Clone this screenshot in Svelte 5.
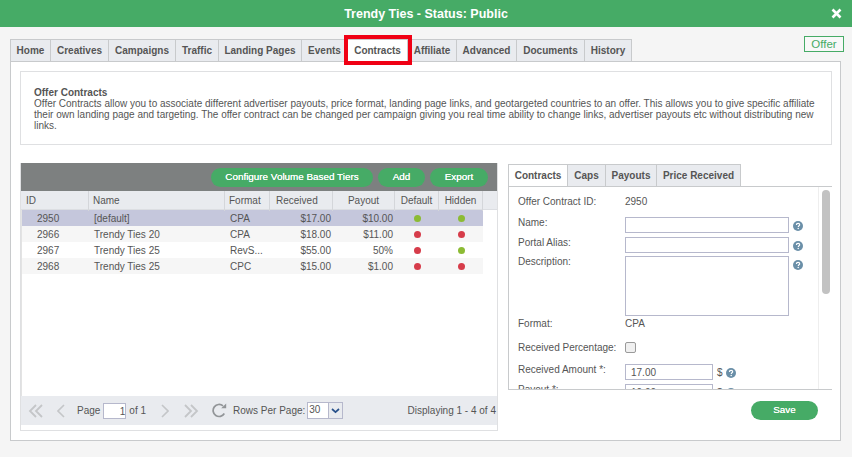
<script>
  const tabs = ['Home','Creatives','Campaigns','Traffic','Landing Pages','Events','Contracts','Affiliate','Advanced','Documents','History'];
  const subTabs = ['Contracts','Caps','Payouts','Price Received'];
  const cols = [['ID','l'],['Name','l'],['Format','l'],['Received','l'],['Payout','c'],['Default','c'],['Hidden','c']];
  const rows = [
    {id:2950,name:'[default]',format:'CPA',received:'$17.00',payout:'$10.00',def:'g',hid:'g'},
    {id:2966,name:'Trendy Ties 20',format:'CPA',received:'$18.00',payout:'$11.00',def:'r',hid:'r'},
    {id:2967,name:'Trendy Ties 25',format:'RevS...',received:'$55.00',payout:'50%',def:'r',hid:'g'},
    {id:2968,name:'Trendy Ties 25',format:'CPC',received:'$15.00',payout:'$1.00',def:'r',hid:'r'}
  ];
</script>

{#snippet help()}
  <svg class="help" width="10" height="10" viewBox="0 0 10 10"><circle cx="5" cy="5" r="5" fill="#6a8fa8"/><path d="M3.4 3.9c0-1 .7-1.6 1.7-1.6s1.6.6 1.6 1.4c0 1.1-1.4 1.1-1.4 2.2" fill="none" stroke="#fff" stroke-width="1.2"/><circle cx="5.2" cy="7.6" r=".75" fill="#fff"/></svg>
{/snippet}

<div class="page">
  <header class="title">
    <span>Trendy Ties - Status: Public</span>
    <svg class="close" width="11" height="11" viewBox="0 0 11 11"><path d="M1.5 1.5l8 8M9.5 1.5l-8 8" stroke="#fff" stroke-width="2.6"/></svg>
  </header>

  <div class="offer-badge">Offer</div>

  <main class="main">
    <nav class="tabs">
      {#each tabs as t}
        <div class="tab" class:active={t === 'Contracts'}>{t}</div>
      {/each}
    </nav>

    <section class="panel">
      <div class="info">
        <b>Offer Contracts</b><br />
        Offer Contracts allow you to associate different advertiser payouts, price format, landing page links, and geotargeted countries to an offer. This allows you to give specific affiliate their own landing page and targeting. The offer contract can be changed per campaign giving you real time ability to change links, advertiser payouts etc without distributing new links.
      </div>

      <div class="columns">
        <div class="grid-box">
          <div class="toolbar">
            <span class="btn wide">Configure Volume Based Tiers</span>
            <span class="btn add">Add</span>
            <span class="btn export">Export</span>
          </div>
          <div class="grid-body">
            <div class="row head">
              {#each cols as c}
                <div class="cell {c[1] === 'c' ? 'center' : ''}">{c[0]}</div>
              {/each}
            </div>
            {#each rows as r, i}
              <div class="row data" class:sel={i === 0} class:odd={i % 2 === 1}>
                <div class="cell idc">{r.id}</div>
                <div class="cell">{r.name}</div>
                <div class="cell">{r.format}</div>
                <div class="cell right">{r.received}</div>
                <div class="cell right">{r.payout}</div>
                <div class="cell center"><i class="dot {r.def}"></i></div>
                <div class="cell center"><i class="dot {r.hid}"></i></div>
              </div>
            {/each}
          </div>
          <div class="pager">
            <svg width="16" height="14" viewBox="0 0 16 14" class="pg first"><path d="M8 1L2 7l6 6M14 1L8 7l6 6" fill="none" stroke="#c4c6c8" stroke-width="1.8"/></svg>
            <svg width="8" height="14" viewBox="0 0 8 14" class="pg prev"><path d="M7 1L1 7l6 6" fill="none" stroke="#c4c6c8" stroke-width="1.6"/></svg>
            <span class="pg-label">Page</span>
            <span class="pg-input">1</span>
            <span>of 1</span>
            <svg width="8" height="14" viewBox="0 0 8 14" class="pg next"><path d="M1 1l6 6-6 6" fill="none" stroke="#c4c6c8" stroke-width="1.6"/></svg>
            <svg width="16" height="14" viewBox="0 0 16 14" class="pg last"><path d="M2 1l6 6-6 6M8 1l6 6-6 6" fill="none" stroke="#c4c6c8" stroke-width="1.8"/></svg>
            <svg width="15" height="15" viewBox="0 0 15 15" class="pg refresh"><path d="M12.3 10.5A6 6 0 1 1 11 2.9" fill="none" stroke="#929598" stroke-width="1.7"/><path d="M9.2 5.2h5V0.4z" fill="#929598"/></svg>
            <span class="rpp">Rows Per Page:</span>
            <span class="pg-select"><span class="val">30</span><span class="arrow"><svg width="9" height="6" viewBox="0 0 9 6"><path d="M1 1l3.5 3.2L8 1" fill="none" stroke="#27508a" stroke-width="1.7"/></svg></span></span>
            <span class="display">Displaying 1 - 4 of 4</span>
          </div>
        </div>

        <div class="detail">
          <div class="sub-tabs">
            {#each subTabs as t, i}
              <div class="sub-tab" class:active={i === 0}>{t}</div>
            {/each}
          </div>
          <div class="detail-body">
            <div class="form">
              <div class="f r1"><label>Offer Contract ID:</label><span>2950</span></div>
              <div class="f r2"><label>Name:</label><span class="input"></span>{@render help()}</div>
              <div class="f r3"><label>Portal Alias:</label><span class="input"></span>{@render help()}</div>
              <div class="f r4"><label>Description:</label><span class="input area"></span>{@render help()}</div>
              <div class="f r5"><label>Format:</label><span>CPA</span></div>
              <div class="f r6"><label>Received Percentage:</label><span class="check"></span></div>
              <div class="f r7"><label>Received Amount *:</label><span class="input short">17.00</span><span class="cur">$</span>{@render help()}</div>
              <div class="f r8"><label>Payout *:</label><span class="input short">10.00</span><span class="cur">$</span>{@render help()}</div>
            </div>
            <div class="scroll"><div class="thumb"></div></div>
          </div>
          <div class="actions"><span class="btn save">Save</span></div>
        </div>
      </div>
    </section>
  </main>
</div>

<style>
  :global(body) { margin: 0; background: #f5f5f5; }
  .page { position: relative; width: 852px; height: 457px; overflow: hidden; background: #f5f5f5; font-family: "Liberation Sans", Arial, sans-serif; font-size: 10px; color: #555; }
  .title { height: 27px; background: #46ab66; color: #fff; font-weight: bold; font-size: 12.5px; display: flex; align-items: center; justify-content: center; position: relative; }
  .close { position: absolute; left: 831px; top: 8px; }
  .offer-badge { position: absolute; left: 804px; top: 36px; width: 38px; height: 14px; border: 1px solid #46ab66; color: #46ab66; font-size: 11.5px; line-height: 14px; text-align: center; background: #f8f8f8; }

  .main { padding: 12px 11px 0 10px; }
  .tabs { display: flex; height: 22px; position: relative; z-index: 1; }
  .tab { box-sizing: border-box; height: 22px; line-height: 21px; text-align: center; border: 1px solid #c8cacc; border-left: none; border-bottom: none; background: #e9ebef; font-weight: bold; font-size: 10px; color: #555; white-space: nowrap; position: relative; }
  .tab:first-child { border-left: 1px solid #c8cacc; }
  .tab:nth-child(1) { width: 41px; }
  .tab:nth-child(2) { width: 58px; }
  .tab:nth-child(3) { width: 67px; }
  .tab:nth-child(4) { width: 43px; }
  .tab:nth-child(5) { width: 83px; }
  .tab:nth-child(6) { width: 46px; }
  .tab:nth-child(7) { width: 60px; }
  .tab:nth-child(8) { width: 49px; }
  .tab:nth-child(9) { width: 60px; }
  .tab:nth-child(10) { width: 68px; }
  .tab:nth-child(11) { width: 47px; }
  .tab.active { background: #fff; height: 23px; z-index: 2; }
  .tab.active::after { content: ""; position: absolute; left: -4px; right: -5px; top: -5px; bottom: -3px; border: 4px solid #f00014; }

  .panel { width: 831px; height: 380px; box-sizing: border-box; background: #fff; border: 1px solid #c8cacc; padding: 9px 0 0 9px; }
  .info { height: 74px; padding: 15px 10px 0 13px; border: 1px solid #dfe0e2; line-height: 11px; color: #555; box-sizing: border-box; width: 812px; }

  .columns { display: flex; margin-top: 18px; }
  .grid-box { width: 478px; height: 268px; box-sizing: border-box; border: 1px solid #dfe0e2; border-top: none; display: flex; flex-direction: column; }
  .toolbar { height: 28px; background: #7d8080; display: flex; align-items: center; justify-content: flex-end; gap: 5px; padding: 0 9px 0 0; flex: none; }
  .btn { display: inline-block; height: 19px; line-height: 18px; border-radius: 10px; background: #46ab66; color: #fff; font-size: 9.9px; text-align: center; text-shadow: 0 0 .6px #fff; }
  .wide { width: 162px; }
  .add { width: 47px; }
  .export { width: 58px; }

  .grid-body { flex: 1; border-left: 1px solid #e3e3e3; }
  .row { display: grid; grid-template-columns: 67px 136px 45px 63px 62px 44px 44px; width: 461px; }
  .row.head { height: 19px; background: #e9ebef; width: 476px; margin-left: -1px; padding-left: 1px; box-sizing: border-box; border-bottom: 1px solid #dcdee2; }
  .head .cell { line-height: 20px; padding-left: 4px; border-right: 1px solid #d4d6da; }
  .head .cell:nth-child(4) { padding-left: 6px; }
  .head .cell.center { padding-left: 0; text-align: center; }
  .data { height: 16px; line-height: 18px; }
  .data.sel { background: #c5c7dc; }
  .data.odd { background: #f6f6f6; }
  .data .cell { padding-left: 5px; white-space: nowrap; color: #555; }
  .data .idc { padding-left: 15px; }
  .data .right { text-align: right; padding: 0 2px 0 0; }
  .data .center { padding: 0; text-align: center; }
  .dot { display: inline-block; width: 7px; height: 7px; border-radius: 50%; }
  .dot.g { background: #8cbb34; }
  .dot.r { background: #d63c4a; }

  .pager { height: 29px; margin-bottom: 5px; flex: none; background: #e9ebef; display: flex; align-items: center; color: #555; padding-left: 7px; box-sizing: border-box; }
  .pg { flex: none; }
  .prev { margin-left: 13px; }
  .pg-label { margin-left: 12px; }
  .pg-input { width: 21px; height: 14px; line-height: 15px; margin: 0 3px 0 3px; border: 1px solid #b6b8cc; background: #fff; text-align: right; }
  .next { margin-left: 15px; }
  .last { margin-left: 14px; }
  .refresh { margin-left: 13px; margin-right: 6px; }
  .pg-select { display: flex; width: 34px; height: 15px; margin-left: 2px; border: 1px solid #b6b8cc; background: #fff; }
  .pg-select .val { width: 19px; padding-left: 1px; line-height: 14px; }
  .pg-select .arrow { flex: 1; background: #e9ebef; border-left: 1px solid #b6b8cc; display: flex; align-items: center; justify-content: center; }
  .display { margin-left: auto; margin-right: 1px; white-space: nowrap; }

  .detail { margin-left: 10px; width: 324px; flex: none; position: relative; top: 1px; }
  .sub-tabs { display: flex; height: 22px; }
  .sub-tab { height: 22px; box-sizing: border-box; line-height: 21px; text-align: center; border: 1px solid #c8cacc; border-left: none; border-bottom: none; background: #e9ebef; font-weight: bold; font-size: 10px; white-space: nowrap; }
  .sub-tab:first-child { border-left: 1px solid #c8cacc; }
  .sub-tab:nth-child(1) { width: 60px; }
  .sub-tab:nth-child(2) { width: 38px; }
  .sub-tab:nth-child(3) { width: 51px; }
  .sub-tab:nth-child(4) { width: 84px; }
  .sub-tab.active { background: #fff; }
  .detail-body { height: 202px; border-top: 1px solid #c8cacc; border-bottom: 1px solid #c8cacc; border-left: 1px solid #c8cacc; display: flex; overflow: hidden; }
  .form { flex: 1; padding: 8px 0 0 9px; }
  .f { display: flex; align-items: flex-start; position: relative; }
  .f label { width: 107px; flex: none; line-height: 11px; white-space: nowrap; }
  .r1 { height: 22px; line-height: 14px; }
  .r1 label, .r5 label { line-height: 14px; }
  .r2 { height: 20px; }
  .r3 { height: 19px; }
  .r4 { height: 61px; }
  .r5 { height: 25px; line-height: 14px; }
  .r6 { height: 22px; }
  .r7 { height: 20px; }
  .input { display: block; width: 162px; height: 14px; border: 1px solid #b6b8cc; background: #fff; }
  .area { height: 58px; }
  .short { width: 81px; padding-left: 5px; line-height: 15px; }
  .help { margin-left: 4px; margin-top: 4px; flex: none; }
  .cur { margin-left: 4px; line-height: 14px; margin-top: 2px; }
  .cur + .help { margin-left: 3px; }
  .check { width: 9px; height: 9px; border: 1px solid #9a9a9a; border-radius: 2px; background: #f0f0f0; }
  .scroll { width: 13px; flex: none; border-left: 1px solid #eee; position: relative; }
  .thumb { width: 8px; height: 104px; margin: 3px 0 0 3px; border-radius: 4px; background: #c2c2c2; }
  .actions { display: flex; justify-content: flex-end; padding: 11px 14px 0 0; }
  .save { width: 67px; }
</style>
